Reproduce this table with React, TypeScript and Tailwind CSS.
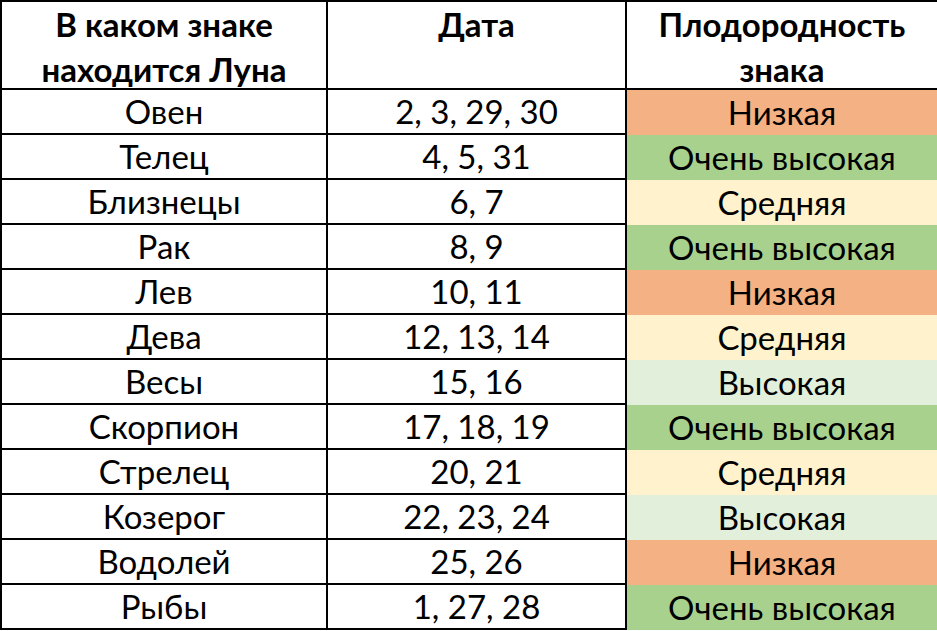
const rows: { sign: string; dates: string; level: string }[] = [
  { sign: 'Овен', dates: '2, 3, 29, 30', level: 'low' },
  { sign: 'Телец', dates: '4, 5, 31', level: 'top' },
  { sign: 'Близнецы', dates: '6, 7', level: 'mid' },
  { sign: 'Рак', dates: '8, 9', level: 'top' },
  { sign: 'Лев', dates: '10, 11', level: 'low' },
  { sign: 'Дева', dates: '12, 13, 14', level: 'mid' },
  { sign: 'Весы', dates: '15, 16', level: 'high' },
  { sign: 'Скорпион', dates: '17, 18, 19', level: 'top' },
  { sign: 'Стрелец', dates: '20, 21', level: 'mid' },
  { sign: 'Козерог', dates: '22, 23, 24', level: 'high' },
  { sign: 'Водолей', dates: '25, 26', level: 'low' },
  { sign: 'Рыбы', dates: '1, 27, 28', level: 'top' },
]

const levels: Record<string, { label: string; cls: string }> = {
  low: { label: 'Низкая', cls: 'bg-[#f4b183]' },
  mid: { label: 'Средняя', cls: 'bg-[#fff2cc]' },
  high: { label: 'Высокая', cls: 'bg-[#e2efda]' },
  top: { label: 'Очень высокая', cls: 'bg-[#a9d18e]' },
}

export default function App() {
  return (
    <div
      className="w-[937px] h-[631px] bg-white text-black overflow-hidden"
      style={{ fontFamily: 'Lato, "Noto Sans", sans-serif' }}
    >
      <div className="grid grid-cols-[326px_299px_1fr] border-t-2 border-l-2 border-black">
        {/* шапка */}
        <div className="h-[88px] border-r-2 border-b-2 border-black text-center font-bold text-[33px] leading-[45px]">
          В каком знаке<br />находится Луна
        </div>
        <div className="h-[88px] border-r-2 border-b-2 border-black text-center font-bold text-[33px] leading-[45px]">
          Дата
        </div>
        <div className="h-[88px] border-b-2 border-black text-center font-bold text-[33px] leading-[45px]">
          Плодородность<br />знака
        </div>

        {rows.map((r, i) => {
          const lv = levels[r.level]
          return (
            <div key={i} className="contents">
              <div className="h-[45px] border-r-2 border-b-2 border-black flex items-center justify-center text-[33px]">
                {r.sign}
              </div>
              <div className="h-[45px] border-r-2 border-b-2 border-black flex items-center justify-center text-[33px]">
                {r.dates}
              </div>
              <div className={`h-[45px] flex items-center justify-center text-[33px] ${lv.cls}`}>
                {lv.label}
              </div>
            </div>
          )
        })}
      </div>
    </div>
  )
}
